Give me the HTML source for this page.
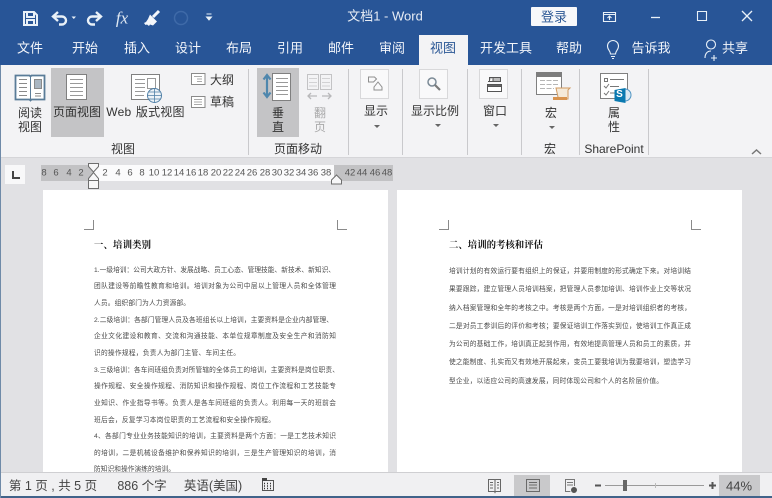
<!DOCTYPE html>
<html lang="zh"><head><meta charset="utf-8"><style>
html,body{margin:0;padding:0}
body{width:772px;height:498px;overflow:hidden;position:relative;background:#e1e1e4;font-family:"Liberation Sans","Noto Sans CJK SC",sans-serif;color:#333}
div,span,svg{position:absolute}
.t{white-space:nowrap;transform:translate(-50%,-50%);line-height:1}
.w{color:#f2f5fa;font-size:13px}
.r{font-size:12px;color:#333}
.sep{width:1px;background:#c9c9cc;top:69px;height:86px}
.n{font-size:9.500px;color:#555;top:173px}
.l{white-space:nowrap;font-size:6.700px;line-height:10px;height:10px;color:#4a4a4a;overflow:visible;filter:blur(.2px)}
.j{text-align:justify;text-align-last:justify}
.s{font-size:12.500px;color:#444}
.h{white-space:nowrap;line-height:12px;font-size:9.400px;font-weight:bold;color:#111;font-family:'Liberation Serif','Noto Serif CJK SC',serif}
svg{overflow:visible}
</style></head><body>
<div style="left:0;top:0;width:772px;height:65px;background:#285597"></div>
<svg style="left:0;top:0" width="240" height="35" fill="none" stroke="#e9f1f8">
<path d="M24 12h10l3 3v10H24zM27 12v5h7v-5M27 25v-5h7v5" stroke-width="2"/>
<path d="M58 12l-5 4.500 5 4.500M54 16.500h8a4 4 0 0 1 0 8h-3" stroke-width="2.400"/>
<path d="M71.500 16.500h4.500l-2.200 2.500z" fill="#e9f1f8" stroke="none"/>
<path d="M96 12l5 4.500-5 4.500M100 16.500h-8a4 4 0 0 0 0 8h3" stroke-width="2.400"/>
<path d="M159 11l-6 6" stroke="#f4f7fb" stroke-width="3"/>
<path d="M150 14.500l7 7-4 4-3-1-1 1.500-2-1.500-1.500.5-1.500-2 2-1 2-3z" fill="#f4f7fb" stroke="none"/>
<circle cx="181" cy="18" r="6.500" stroke="#3f6aa8" stroke-width="1.500"/>
<path d="M206.500 14h5M206.500 17h5l-2.500 3z" fill="#e9f1f8" stroke-width="1"/>
</svg>
<span class="t" style="left:122px;top:18px;font-family:'Liberation Serif',serif;font-style:italic;font-size:17px;color:#dfe8f2">fx</span>
<span class="t" style="left:385px;top:16px;font-size:13px;color:#e8edf5">文档1 - Word</span>
<div style="left:531px;top:7px;width:46px;height:19px;background:#f7f8fa;border-radius:1px"></div>
<span class="t" style="left:554px;top:17px;font-size:13px;color:#2d5995">登录</span>
<svg style="left:600px;top:5px" width="172" height="26" fill="none" stroke="#e9f1f8" stroke-width="1.100">
<path d="M17.500 7.500h12v9h-12zM17.500 9.500h12M23.500 15v-4M21.500 13l2-2 2 2" transform="translate(-14 0)"/>
<path d="M51 12.500h9" stroke-width="1.300"/>
<path d="M97.500 6.500h9v9h-9z"/>
<path d="M142 6l10 10M152 6l-10 10" stroke-width="1.300"/>
</svg>
<span class="t w" style="left:30px;top:48px">文件</span>
<span class="t w" style="left:85px;top:48px">开始</span>
<span class="t w" style="left:137px;top:48px">插入</span>
<span class="t w" style="left:188px;top:48px">设计</span>
<span class="t w" style="left:239px;top:48px">布局</span>
<span class="t w" style="left:290px;top:48px">引用</span>
<span class="t w" style="left:341px;top:48px">邮件</span>
<span class="t w" style="left:392px;top:48px">审阅</span>
<div style="left:419px;top:35px;width:49px;height:31px;background:#f3f3f5"></div>
<span class="t" style="left:443px;top:48px;font-size:13px;color:#2b5795">视图</span>
<span class="t w" style="left:506px;top:48px">开发工具</span>
<span class="t w" style="left:569px;top:48px">帮助</span>
<span class="t w" style="left:651px;top:48px">告诉我</span>
<span class="t w" style="left:735px;top:48px">共享</span>
<svg style="left:605px;top:38px" width="125" height="24" fill="none" stroke="#e9f1f8" stroke-width="1.100">
<path d="M5.500 16c0-3-3-4-3-8a5.500 5.500 0 0 1 11 0c0 4-3 5-3 8zM6 18.500h4M7 20.500h2"/>
<circle cx="106" cy="6.500" r="4.500"/><path d="M100 20c0-4 2-7 6-7M109 17v6M106 20h6"/>
</svg>

<div style="left:0;top:65px;width:772px;height:92px;background:#f3f3f5"></div>
<div style="left:0;top:157px;width:772px;height:1px;background:#d5d5d8"></div>
<div style="left:51px;top:68px;width:53px;height:69px;background:#c4c4c6"></div>
<div style="left:257px;top:68px;width:42px;height:69px;background:#c4c4c6"></div>
<div class="sep" style="left:248px"></div><div class="sep" style="left:348px"></div><div class="sep" style="left:402px"></div><div class="sep" style="left:467px"></div><div class="sep" style="left:521px"></div><div class="sep" style="left:579px"></div><div class="sep" style="left:648px"></div>

<svg style="left:0;top:65px" width="772" height="70" fill="none" stroke="#777" stroke-width="1">
<!-- read mode -->
<path d="M15.500 10.500h14l1 1 1-1h13v24h-13l-1 1-1-1h-14z" fill="#fff" stroke="#5a7c98" stroke-width="1.800"/>
<path d="M30.500 11v24" stroke="#5a7c98"/>
<path d="M19 14.500h8M19 18.500h8M19 22.500h8M19 26.500h8M19 30.500h8M35 28.500h6M35 31h6" stroke="#8a8a8a"/>
<path d="M34.500 14.500h7v9h-7z" fill="#a9b6c2" stroke="#8a8a8a"/>
<!-- print -->
<path d="M66.500 9.500h20v25h-20z" fill="#fff" stroke="#808080"/>
<path d="M70 14.500h13M70 18.500h13M70 22.500h13M70 26.500h13M70 30.500h13" stroke="#999"/>
<!-- web -->
<path d="M131.500 9.500h28v25h-28z" fill="#fff" stroke="#808080"/>
<path d="M135 14.500h10M135 18.500h10M135 22.500h10M135 26.500h10M135 30.500h9M147.500 13.500h8v10h-8z" stroke="#999"/>
<circle cx="154.500" cy="30.500" r="7" fill="#eef3f7" stroke="#4f7fa6"/>
<path d="M147.500 30.500h14M154.500 23.500v14M149 27h11M149 34h11" stroke="#4f7fa6" stroke-width=".8"/>
<!-- outline draft -->
<path d="M191.500 8.500h13.500v11h-13.500zM191.500 31.500h13.500v11h-13.500z" fill="#fff" stroke="#8a8a8a"/>
<path d="M194 11.500h8M197 14h5M197 16.500h5M194 34.500h8M194 37h8M194 39.500h8" stroke="#aaa"/>
<!-- vertical -->
<path d="M272.500 8.500h18v27h-18z" fill="#fff" stroke="#808080"/>
<path d="M276 13.500h12M276 17.500h12M276 21.500h12M276 25.500h12M276 29.500h12" stroke="#999"/>
<path d="M267 11v20M263.500 14.500l3.500-4.500 3.500 4.500M263.500 27.500l3.500 4.500 3.500-4.500" stroke="#4f87ad" stroke-width="2.200"/>
<!-- side -->
<path d="M307.500 9.500h11v15h-11zM320.500 9.500h11v15h-11z" stroke="#c3c3c5"/>
<path d="M309 13.500h8M309 17.500h8M309 21h8M322 13.500h8M322 17.500h8M322 21h8" stroke="#d2d2d4"/>
<path d="M308 31h9M311 28l-3 3 3 3M331 31h-9M328 28l3 3-3 3" stroke="#b8b8ba" stroke-width="1.300"/>
<!-- show -->
<path d="M360.500 4.500h28v29h-28z" fill="#f9f9fa" stroke="#d8d8da"/>
<path d="M368.500 12h6l2 2-3 3h-5zM374 22l4-5 4 5v3h-8z" stroke="#8e8e8e"/>
<!-- zoom -->
<path d="M419.500 4.500h28v29h-28z" fill="#f9f9fa" stroke="#d8d8da"/>
<circle cx="432" cy="17" r="4" stroke="#7b8a96" stroke-width="1.500"/><path d="M435 20l5 5" stroke="#7b7b7b" stroke-width="2.200"/>
<!-- window -->
<path d="M479.500 4.500h28v29h-28z" fill="#f9f9fa" stroke="#d8d8da"/>
<path d="M489.500 12.500h11v4h-11zM488 16.500h5v-4" stroke="#555" fill="#bbb"/>
<path d="M487.500 19.500h14v7h-14z" fill="#fff" stroke="#555"/><path d="M487.500 19.500h14v2h-14z" fill="#666" stroke="#555"/>
<!-- macro -->
<path d="M536.500 8.500h25v21h-25z" fill="#fff" stroke="#808080"/>
<path d="M536 7h26v5h-26z" fill="#7d7d7d" stroke="none"/>
<path d="M540 15.500h18M540 19.500h18M540 23.500h14" stroke="#b5b5b5" stroke-dasharray="5 1.500"/>
<path d="M556 23h14l-2 2v9h-12l2-2z" fill="#f5ead9" stroke="#d19a60"/>
<path d="M553 32h14v3h-14z" fill="#d9944f" stroke="none"/>
<!-- sharepoint -->
<path d="M600.500 8.500h27v25h-27z" fill="#fff" stroke="#808080"/>
<path d="M604.500 13.500h3v3h-3z" stroke="#777"/><path d="M610 14.500h14M610 21.500h9M610 28h7" stroke="#777"/>
<path d="M604 21l2 2 3-4M604 28l2 2 3-4" stroke="#777"/>
<circle cx="625" cy="30" r="6" fill="#dbe9f3" stroke="#4e93c2"/>
<path d="M614.500 25l11-2v15l-11-2z" fill="#0a79b0" stroke="none"/>
</svg>
<span class="t" style="left:619.500px;top:95px;font-size:10px;font-weight:bold;color:#fff">S</span>

<span class="t r" style="left:30px;top:113px">阅读</span>
<span class="t r" style="left:30px;top:127px">视图</span>
<span class="t r" style="left:77px;top:112px">页面视图</span>
<span class="t r" style="left:145.500px;top:112px;word-spacing:1px;letter-spacing:.2px">Web 版式视图</span>
<span class="t r" style="left:222px;top:80px">大纲</span>
<span class="t r" style="left:222px;top:102px">草稿</span>
<span class="t r" style="left:278px;top:113px">垂</span>
<span class="t r" style="left:278px;top:127px">直</span>
<span class="t r" style="left:320px;top:113px;color:#a9a9aa">翻</span>
<span class="t r" style="left:320px;top:127px;color:#a9a9aa">页</span>
<span class="t r" style="left:376px;top:111px">显示</span>
<span class="t r" style="left:435px;top:111px">显示比例</span>
<span class="t r" style="left:495px;top:111px">窗口</span>
<span class="t r" style="left:551px;top:113px">宏</span>
<span class="t r" style="left:614px;top:113px">属</span>
<span class="t r" style="left:614px;top:127px">性</span>
<span class="t r" style="left:123px;top:149px">视图</span>
<span class="t r" style="left:298px;top:149px">页面移动</span>
<span class="t r" style="left:550px;top:149px">宏</span>
<span class="t r" style="left:614px;top:149px">SharePoint</span>
<svg style="left:0;top:120px" width="772" height="40" fill="#666">
<path d="M374 5h6l-3 3zM435 4h6l-3 3zM493 4h6l-3 3zM549 6h6l-3 3z"/>
<path d="M752 34l4.500-4 4.500 4" fill="none" stroke="#777" stroke-width="1.500"/>
</svg>

<!-- ruler row -->
<div style="left:5px;top:165px;width:20px;height:19px;background:#f8f8f9"></div>
<svg style="left:10px;top:170px" width="12" height="12" fill="none" stroke="#444" stroke-width="2"><path d="M3 1v7h7"/></svg>
<div style="left:41px;top:165px;width:352px;height:16px;background:#c2c2c4"></div>
<div style="left:94px;top:165px;width:240px;height:16px;background:#fbfbfc"></div>
<span class="t n" style="left:44px">8</span><span class="t n" style="left:56px">6</span><span class="t n" style="left:69px">4</span><span class="t n" style="left:81px">2</span>
<span class="t n" style="left:105px">2</span><span class="t n" style="left:118px">4</span><span class="t n" style="left:130px">6</span><span class="t n" style="left:142px">8</span><span class="t n" style="left:154px">10</span><span class="t n" style="left:167px">12</span><span class="t n" style="left:179px">14</span><span class="t n" style="left:191px">16</span><span class="t n" style="left:203px">18</span><span class="t n" style="left:216px">20</span><span class="t n" style="left:228px">22</span><span class="t n" style="left:240px">24</span><span class="t n" style="left:252px">26</span><span class="t n" style="left:265px">28</span><span class="t n" style="left:277px">30</span><span class="t n" style="left:289px">32</span><span class="t n" style="left:301px">34</span><span class="t n" style="left:313px">36</span><span class="t n" style="left:326px">38</span><span class="t n" style="left:350px">42</span><span class="t n" style="left:362px">44</span><span class="t n" style="left:375px">46</span><span class="t n" style="left:387px">48</span>
<svg style="left:85px;top:161px" width="260" height="30" fill="#f7f7f8" stroke="#6e6e6e"><path d="M3.500 2.500h10v3l-5 5.500-5-5.500zM3.500 17.500l5-6 5 6v2h-10z"/><path d="M3.500 19.500h10v8h-10z"/><path d="M246.500 19l5-5 5 5v4h-10z"/></svg>

<!-- pages -->
<div style="left:43px;top:190px;width:345px;height:282px;background:#fff;border:0"></div>
<div style="left:397px;top:190px;width:345px;height:282px;background:#fff"></div>
<svg style="left:0;top:215px" width="772" height="20" fill="none" stroke="#8a8a8a"><path d="M84 14.500h9.500V5M337.500 5v9.500H347M439 14.500h9.500V5M691.500 5v9.500H701"/></svg>

<div class="h" style="left:94px;top:240px;width:57px;text-align-last:justify">一、培训类别</div>
<div class="l j" style="left:94px;top:266px;width:241px">1.一级培训：公司大政方针、发展战略、员工心态、管理技能、新技术、新知识、</div>
<div class="l j" style="left:94px;top:282px;width:242px">团队建设等前瞻性教育和培训。培训对象为公司中层以上管理人员和全体管理</div>
<div class="l j" style="left:94px;top:299px;width:96px">人员。组织部门为人力资源部。</div>
<div class="l j" style="left:94px;top:316px;width:239px">2.二级培训：各部门管理人员及各班组长以上培训，主要资料是企业内部管理、</div>
<div class="l j" style="left:94px;top:332px;width:242px">企业文化建设和教育、交流和沟通技能、本单位规章制度及安全生产和消防知</div>
<div class="l j" style="left:94px;top:349px;width:146px">识的操作规程，负责人为部门主管、车间主任。</div>
<div class="l j" style="left:94px;top:366px;width:245px">3.三级培训：各车间班组负责对所管辖的全体员工的培训，主要资料是岗位职责、</div>
<div class="l j" style="left:94px;top:382px;width:242px">操作规程、安全操作规程、消防知识和操作规程、岗位工作流程和工艺技能专</div>
<div class="l j" style="left:94px;top:399px;width:242px">业知识、作业指导书等。负责人是各车间班组的负责人。利用每一天的班前会</div>
<div class="l j" style="left:94px;top:416px;width:181px">班后会，反复学习本岗位职责的工艺流程和安全操作规程。</div>
<div class="l j" style="left:94px;top:432px;width:242px">4、各部门专业业务技能知识的培训，主要资料是两个方面：一是工艺技术知识</div>
<div class="l j" style="left:94px;top:449px;width:242px">的培训，二是机械设备维护和保养知识的培训，三是生产管理知识的培训，消</div>
<div class="l j" style="left:94px;top:465px;width:81px">防知识和操作演练的培训。</div>

<div class="h" style="left:449px;top:240px;width:94px;text-align-last:justify">二、培训的考核和评估</div>
<div class="l j" style="left:449px;top:267px;width:242px">培训计划的有效运行要有组织上的保证，并要用制度的形式确定下来。对培训结</div>
<div class="l j" style="left:449px;top:285px;width:242px">果要跟踪，建立管理人员培训档案，把管理人员参加培训、培训作业上交等状况</div>
<div class="l j" style="left:449px;top:304px;width:242px">纳入档案管理和全年的考核之中。考核是两个方面，一是对培训组织者的考核，</div>
<div class="l j" style="left:449px;top:322px;width:242px">二是对员工参训后的评价和考核；要保证培训工作落实到位，使培训工作真正成</div>
<div class="l j" style="left:449px;top:340px;width:242px">为公司的基础工作，培训真正起到作用，有效地提高管理人员和员工的素质，并</div>
<div class="l j" style="left:449px;top:358px;width:242px">使之能制度、扎实而又有效地开展起来，变员工要我培训为我要培训，塑造学习</div>
<div class="l j" style="left:449px;top:377px;width:214px">型企业，以适应公司的高速发展，同时体现公司和个人的名阶层价值。</div>

<!-- status -->
<div style="left:0;top:472px;width:772px;height:24px;background:#f0f0f2;border-top:1px solid #cfcfd2;box-sizing:border-box"></div>
<div style="left:0;top:496px;width:772px;height:2px;background:#41638a"></div>
<div style="left:0;top:65px;width:1px;height:433px;background:#6f8aa8"></div>
<span class="t s" style="left:53px;top:486px">第 1 页 , 共 5 页</span>
<span class="t s" style="left:142px;top:486px">886 个字</span>
<span class="t s" style="left:213px;top:486px">英语(美国)</span>
<div style="left:514px;top:475px;width:36px;height:21px;background:#c9c9cb"></div>
<div style="left:719px;top:475px;width:41px;height:21px;background:#c9c9cb"></div>
<span class="t s" style="left:739px;top:486px;font-size:13px">44%</span>
<svg style="left:0;top:470px" width="772" height="28" fill="none" stroke="#666">
<path d="M262.500 10.500h11v10h-11z" stroke="#555"/><path d="M262 8h5v3h-5z" fill="#444" stroke="none"/><path d="M264 13.500h1M267 13.500h1M270 13.500h1M264 16h1M267 16h1M270 16h1M264 18.500h1M267 18.500h1M270 18.500h1" stroke="#333" stroke-width="1.500"/>
<path d="M488.500 9.500h6l.5 1 .5-1h5v12h-5l-.5 1-.5-1h-6zM495 10v11M490 12.500h3M490 15h3M490 18h3M497 12.500h2M497 15h2M497 18h2" stroke="#666"/>
<path d="M526.500 9.500h13v12h-13zM529 12.500h8M529 15h8M529 18h8" stroke="#6a6a6a"/>
<path d="M565.500 9.500h9v12h-9zM567 12.500h6M567 15h6" stroke="#777"/><circle cx="574" cy="20" r="3.500" fill="#555" stroke="#f0f0f2"/>
<path d="M595 15.500h6" stroke="#555" stroke-width="2"/>
<path d="M605 15.500h99" stroke="#9a9a9a"/><path d="M655.500 13v5" stroke="#bbb"/>
<path d="M625 10v11" stroke="#666" stroke-width="4"/>
<path d="M709 15.500h7M712.500 12v7" stroke="#555" stroke-width="2"/>
</svg>
</body></html>
